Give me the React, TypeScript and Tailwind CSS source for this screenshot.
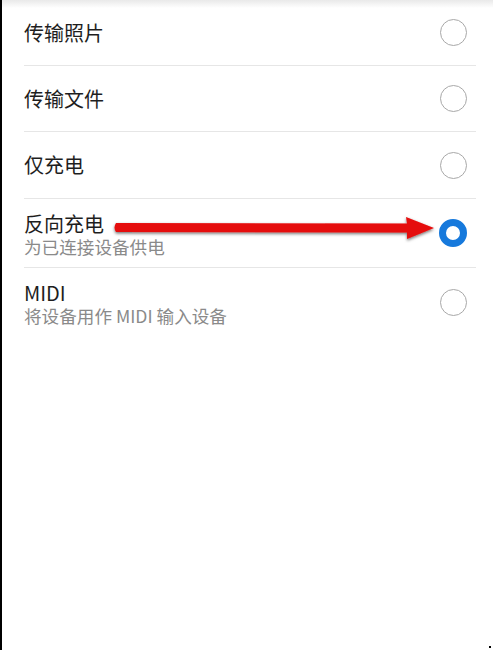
import React from "react";

const Radio = ({ checked }: { checked?: boolean }) =>
  checked ? (
    <div className="w-[28px] h-[28px] rounded-full border-[7px] border-[#1679dc] bg-white" />
  ) : (
    <div className="w-[27px] h-[27px] rounded-full border-[1.5px] border-[#a8a8a8] bg-white" />
  );

const Row = ({
  title,
  sub,
  checked,
  h,
  last,
}: {
  title: string;
  sub?: string;
  checked?: boolean;
  h: string;
  last?: boolean;
}) => (
  <div className={`flex items-center justify-between ${h} ${last ? "" : "border-b border-[#e6e6e6]"}`}>
    <div className={`flex flex-col ${sub ? "pt-[3px]" : ""}`}>
      <div className="text-[20px] leading-[24px] text-[#1e1e1e]">{title}</div>
      {sub && <div className="text-[17.6px] leading-[22px] text-[#8a8a8a]">{sub}</div>}
    </div>
    <div className="mr-[9px]">
      <Radio checked={checked} />
    </div>
  </div>
);

export default function App() {
  return (
    <div
      className="relative w-[493px] h-[650px] bg-white border-l-2 border-black overflow-hidden"
      style={{ fontFamily: '"Noto Sans CJK SC", "Noto Sans", sans-serif' }}
    >
      <div className="absolute top-0 left-0 right-0 h-[8px] bg-gradient-to-b from-[#e9e9e9] to-white" />
      <div className="relative ml-[22px] mr-[17px] flex flex-col">
        <Row title="传输照片" h="h-[66px]" />
        <Row title="传输文件" h="h-[66px]" />
        <Row title="仅充电" h="h-[67px]" />
        <Row title="反向充电" sub="为已连接设备供电" checked h="h-[69px]" />
        <Row title="MIDI" sub="将设备用作 MIDI 输入设备" h="h-[68px]" last />
      </div>
      {/* red arrow overlay */}
      <svg
        className="absolute left-[108px] top-[213px]"
        width="330"
        height="30"
        viewBox="0 0 330 30"
      >
        <defs>
          <filter id="sh" x="-5%" y="-50%" width="110%" height="200%">
            <feDropShadow dx="0" dy="1.5" stdDeviation="1.5" floodColor="#000" floodOpacity="0.55" />
          </filter>
        </defs>
        <g filter="url(#sh)">
          <path d="M6 10 L297 10.5 L296 4 L324 15 L297 26 L297 19.5 L6 19 Q3 14.5 6 10 Z" fill="#e50b0b" />
        </g>
      </svg>
      <div className="absolute right-[2px] bottom-[2px] w-[2px] h-[2px] bg-black" />
    </div>
  );
}
